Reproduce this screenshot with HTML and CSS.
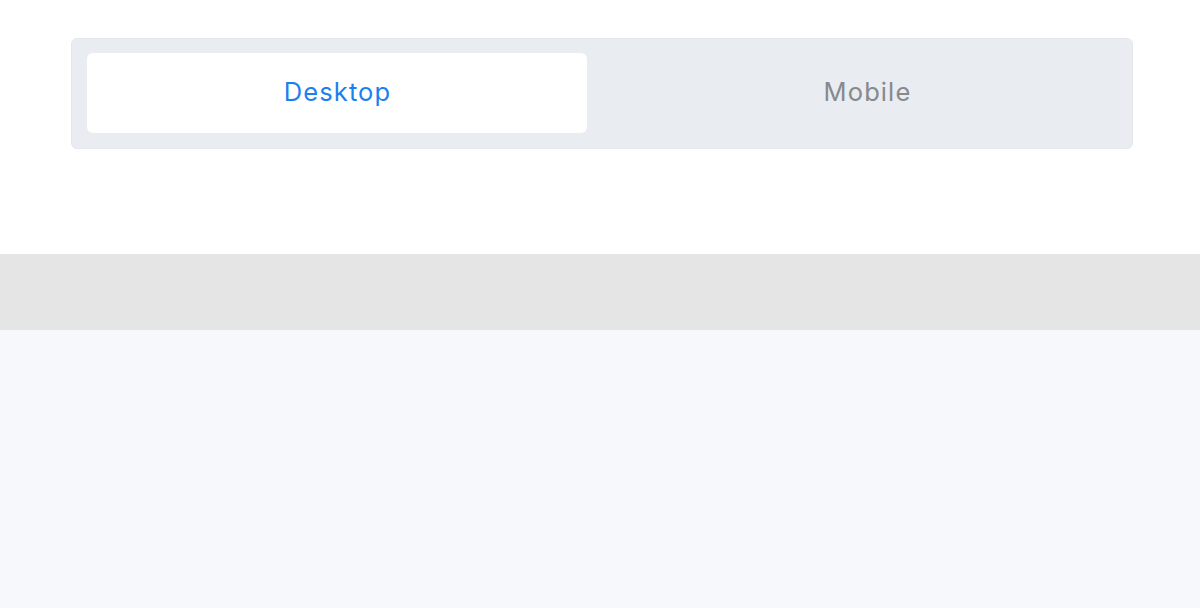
FILE: index.html
```html
<!DOCTYPE html>
<html lang="en">
<head>
<meta charset="utf-8">
<title>Preview</title>
<link rel="stylesheet" href="styles.css">
</head>
<body>
  <div class="top">
    <div class="segmented">
      <button class="tab active">Desktop</button>
      <button class="tab">Mobile</button>
    </div>
  </div>
  <div class="band"></div>
  <div class="canvas"></div>
</body>
</html>
```

FILE: styles.css
```css
html, body {
  margin: 0;
  padding: 0;
  height: 100%;
}
body {
  font-family: Inter, "Open Sans", "Liberation Sans", sans-serif;
  background: #f7f8fb;
  display: flex;
  flex-direction: column;
}
.top {
  background: #ffffff;
  height: 254px;
  padding: 38px 67px 0 71px;
  box-sizing: border-box;
}
.segmented {
  display: flex;
  gap: 30px;
  height: 111px;
  box-sizing: border-box;
  padding: 14px 15px 15px 15px;
  background: #e9ecf1;
  border: 1px solid #e4e7ec;
  border-radius: 6px;
}
.tab {
  flex: 1;
  border: none;
  background: transparent;
  border-radius: 6px;
  font-family: inherit;
  font-size: 25.5px;
  font-weight: 400;
  letter-spacing: 1.1px;
  line-height: 1;
  color: #87898d;
  padding: 0 0 2px 1px;
  margin: 0;
  cursor: pointer;
}
.tab.active {
  background: #ffffff;
  color: #1c7ff0;
}
.band {
  height: 76px;
  background: #e5e5e5;
}
.canvas {
  flex: 1;
  background: #f7f8fb;
}
```
